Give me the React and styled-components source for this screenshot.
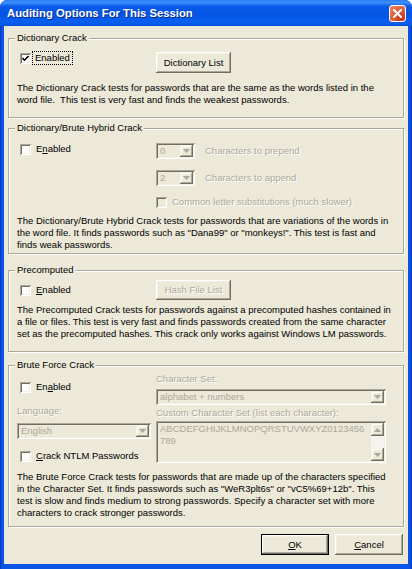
import React from 'react';
import styled, { createGlobalStyle } from 'styled-components';

const GlobalStyle = createGlobalStyle`
  html, body {
    margin: 0;
    padding: 0;
    background: #fff;
  }
  * {
    box-sizing: border-box;
  }
`;

//window frame and title bar
const Window = styled.div`
  width: 412px;
  height: 569px;
  display: flex;
  flex-direction: column;
  background: linear-gradient(90deg, #0031c4 0, #0a55e6 2px, #0a55e6 calc(100% - 2px), #0031c4 100%);
  border-radius: 7px 7px 0 0;
  overflow: hidden;
`;

const TitleBar = styled.div`
  height: 26px;
  flex: none;
  display: flex;
  align-items: center;
  justify-content: space-between;
  padding: 0 6px 0 7px;
  background: linear-gradient(180deg, #2a7cf7 0%, #3d8ffb 10%, #0a5ae8 25%, #0455e4 55%, #0860f0 85%, #0450dc 100%);
`;

const Title = styled.span`
  color: #fff;
  font: bold 11.3px 'Liberation Sans', Arial, sans-serif;
  text-shadow: 1px 1px 0 #0b2a8f;
`;

const CloseButton = styled.div`
  width: 17px;
  height: 17px;
  border: 1px solid #fff;
  border-radius: 3px;
  background: radial-gradient(circle at 75% 80%, #c2361a 0%, #e0603c 55%, #f08a68 100%);
  display: flex;
  align-items: center;
  justify-content: center;
`;

const Body = styled.div`
  flex: 1;
  margin: 0 4px 5px;
  padding: 6px 4px 0;
  background: #ece9d8;
  display: flex;
  flex-direction: column;
  font: 9.5px/12px 'Liberation Sans', Arial, sans-serif;
  color: #000;
`;

//group boxes
const Group = styled.fieldset`
  margin: ${(p) => p.$mt || 0}px 0 0;
  padding: ${(p) => p.$pt}px 8px ${(p) => p.$pb}px;
  border: 1px solid #aca899;
  box-shadow: inset 1px 1px 0 #fff, 1px 1px 0 #fff;
  min-width: 0;
`;

const Legend = styled.legend`
  padding: 0 2px;
  margin-left: -2px;
  line-height: 12px;
  background: #ece9d8;
`;

const Split = styled.div`
  display: grid;
  grid-template-columns: 139px 1fr;
  align-items: ${(p) => p.$align || 'start'};
`;

const Column = styled.div`
  display: flex;
  flex-direction: column;
  align-items: flex-start;
`;

const Line = styled.div`
  display: flex;
  align-items: center;
  gap: 10px;
  margin-top: ${(p) => p.$mt || 0}px;
`;

const Desc = styled.p`
  margin: ${(p) => p.$mt}px 0 0;
  white-space: pre;
  line-height: 12px;
`;

const Label = styled.div`
  margin-top: ${(p) => p.$mt || 0}px;
  line-height: 12px;
  color: ${(p) => (p.$disabled ? '#aca899' : '#000')};
  text-shadow: ${(p) => (p.$disabled ? '1px 1px 0 #fff' : 'none')};
`;

//checkbox
const CheckRow = styled.label`
  display: flex;
  align-items: center;
  gap: 5px;
  height: 12px;
  margin: ${(p) => p.$mt || 0}px 0 0 3px;
  color: ${(p) => (p.$disabled ? '#aca899' : '#000')};
  text-shadow: ${(p) => (p.$disabled ? '1px 1px 0 #fff' : 'none')};
  white-space: nowrap;
`;

const Box = styled.span`
  width: 11px;
  height: 11px;
  flex: none;
  display: flex;
  align-items: center;
  justify-content: center;
  background: ${(p) => (p.$disabled ? '#ece9d8' : '#fff')};
  box-shadow: inset 1px 1px 0 #aca899, inset -1px -1px 0 #fff, inset 2px 2px 0 #716f64,
    inset -2px -2px 0 #f1efe2;
`;

const Focus = styled.span`
  outline: 1px dotted #000;
  outline-offset: 0;
  padding: 0 2px;
  margin-left: -3px;
`;

const Check = ({ checked, disabled, focused, mt, children }) => (
  <CheckRow $mt={mt} $disabled={disabled}>
    <Box $disabled={disabled}>
      {checked && (
        <svg width='7' height='7' viewBox='0 0 7 7'>
          <polyline points='0.5,3 2.5,5.2 6.5,1' fill='none' stroke='#000' strokeWidth='1.6' />
        </svg>
      )}
    </Box>
    {focused ? <Focus>{children}</Focus> : <span>{children}</span>}
  </CheckRow>
);

//buttons
const Button = styled.button`
  width: ${(p) => p.$w}px;
  height: ${(p) => p.$h || 21}px;
  padding: 0;
  font: inherit;
  color: ${(p) => (p.disabled ? '#aca899' : '#000')};
  text-shadow: ${(p) => (p.disabled ? '1px 1px 0 #fff' : 'none')};
  background: #ece9d8;
  border: ${(p) => (p.$default ? '1px solid #000' : 'none')};
  box-shadow: inset -1px -1px 0 #716f64, inset 1px 1px 0 #fff, inset -2px -2px 0 #aca899,
    inset 2px 2px 0 #f1efe2;
`;

const Footer = styled.div`
  display: flex;
  justify-content: flex-end;
  gap: 6px;
  margin-top: 7px;
  padding-right: 1px;
`;

//combo boxes and text box
const Sunken = styled.div`
  width: ${(p) => p.$w}px;
  height: ${(p) => p.$h || 16}px;
  margin-top: ${(p) => p.$mt || 0}px;
  padding: 2px;
  display: flex;
  background: #ece9d8;
  color: #aca899;
  box-shadow: inset 1px 1px 0 #aca899, inset -1px -1px 0 #fff, inset 2px 2px 0 #716f64,
    inset -2px -2px 0 #f1efe2;
`;

const FieldText = styled.span`
  flex: 1;
  padding: 0 2px;
  line-height: 12px;
  white-space: pre;
  overflow: hidden;
`;

const ArrowButton = styled.span`
  width: 13px;
  height: ${(p) => p.$h || 12}px;
  flex: none;
  display: flex;
  align-items: center;
  justify-content: center;
  background: #ece9d8;
  box-shadow: inset -1px -1px 0 #716f64, inset 1px 1px 0 #f1efe2, inset -2px -2px 0 #aca899,
    inset 2px 2px 0 #fff;
`;

const ScrollBar = styled.div`
  width: 13px;
  flex: none;
  display: flex;
  flex-direction: column;
  justify-content: space-between;
  background: #f4f3ee;
`;

const Arrow = ({ up }) => (
  <svg width='7' height='4' viewBox='0 0 7 4'>
    <polygon points={up ? '0,4 7,4 3.5,0' : '0,0 7,0 3.5,4'} fill='#aca899' />
  </svg>
);

const Combo = ({ w, mt, value }) => (
  <Sunken $w={w} $mt={mt}>
    <FieldText>{value}</FieldText>
    <ArrowButton>
      <Arrow />
    </ArrowButton>
  </Sunken>
);

const App = () => {
  return (
    <>
      <GlobalStyle />
      <Window>
        <TitleBar>
          <Title>Auditing Options For This Session</Title>
          <CloseButton>
            <svg width='9' height='9' viewBox='0 0 9 9'>
              <path d='M1 1 L8 8 M8 1 L1 8' stroke='#fff' strokeWidth='2' strokeLinecap='square' />
            </svg>
          </CloseButton>
        </TitleBar>
        <Body>
          <Group $pt={8} $pb={11}>
            <Legend>Dictionary Crack</Legend>
            <Split>
              <Check checked focused>
                Enabled
              </Check>
              <Button $w={75}>Dictionary List</Button>
            </Split>
            <Desc $mt={9}>
              {'The Dictionary Crack tests for passwords that are the same as the words listed in the\nword file.  This test is very fast and finds the weakest passwords.'}
            </Desc>
          </Group>

          <Group $mt={4} $pt={9} $pb={2}>
            <Legend>Dictionary/Brute Hybrid Crack</Legend>
            <Split>
              <Check>
                E<u>n</u>abled
              </Check>
              <Column>
                <Line>
                  <Combo w={39} value='0' />
                  <Label $disabled>Characters to prepend</Label>
                </Line>
                <Line $mt={11}>
                  <Combo w={39} value='2' />
                  <Label $disabled>Characters to append</Label>
                </Line>
                <CheckRow $mt={10} $disabled style={{ marginLeft: 0 }}>
                  <Box $disabled />
                  <span>Common letter substitutions (much slower)</span>
                </CheckRow>
              </Column>
            </Split>
            <Desc $mt={7}>
              {'The Dictionary/Brute Hybrid Crack tests for passwords that are variations of the words in\nthe word file. It finds passwords such as "Dana99" or "monkeys!". This test is fast and\nfinds weak passwords.'}
            </Desc>
          </Group>

          <Group $mt={10} $pt={4} $pb={11}>
            <Legend>Precomputed</Legend>
            <Split $align='center'>
              <Check>
                <u>E</u>nabled
              </Check>
              <Button $w={75} $h={20} disabled>
                Hash File List
              </Button>
            </Split>
            <Desc $mt={4}>
              {'The Precomputed Crack tests for passwords against a precomputed hashes contained in\na file or files. This test is very fast and finds passwords created from the same character\nset as the precomputed hashes. This crack only works against Windows LM passwords.'}
            </Desc>
          </Group>

          <Group $mt={7} $pt={2} $pb={7}>
            <Legend>Brute Force Crack</Legend>
            <Split>
              <Column>
                <Check mt={8}>
                  En<u>a</u>bled
                </Check>
                <Label $mt={12} $disabled>
                  Language:
                </Label>
                <Combo w={134} mt={6} value='English' />
                <Check mt={11}>
                  <u>C</u>rack NTLM Passwords
                </Check>
              </Column>
              <Column>
                <Label $disabled>Character Set:</Label>
                <Combo w={230} mt={4} value='alphabet + numbers' />
                <Label $mt={2} $disabled>
                  Custom Character Set (list each character):
                </Label>
                <Sunken $w={230} $h={42} $mt={2}>
                  <FieldText>{'ABCDEFGHIJKLMNOPQRSTUVWXYZ0123456\n789'}</FieldText>
                  <ScrollBar>
                    <ArrowButton $h={13}>
                      <Arrow up />
                    </ArrowButton>
                    <ArrowButton $h={13}>
                      <Arrow />
                    </ArrowButton>
                  </ScrollBar>
                </Sunken>
              </Column>
            </Split>
            <Desc $mt={8}>
              {'The Brute Force Crack tests for passwords that are made up of the characters specified\nin the Character Set. It finds passwords such as "WeR3plt6s" or "vC5%69+12b". This\ntest is slow and finds medium to strong passwords. Specify a character set with more\ncharacters to crack stronger passwords.'}
            </Desc>
          </Group>

          <Footer>
            <Button $w={68} $default>
              <u>O</u>K
            </Button>
            <Button $w={68}>
              <u>C</u>ancel
            </Button>
          </Footer>
        </Body>
      </Window>
    </>
  );
};

export default App;
